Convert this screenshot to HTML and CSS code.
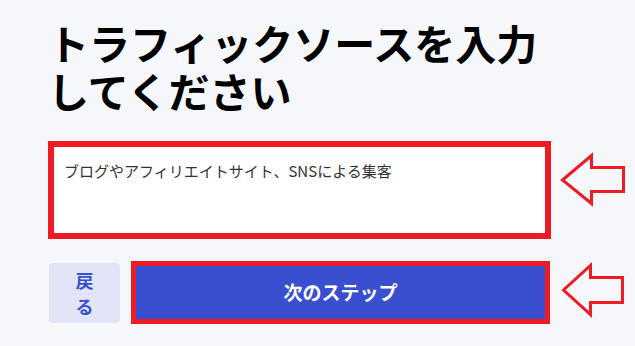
FILE: index.html
```html
<!DOCTYPE html>
<html lang="ja">
<head>
  <meta charset="UTF-8">
  <meta name="viewport" content="width=device-width, initial-scale=1.0">
  <title>トラフィックソース</title>
  <link rel="stylesheet" href="styles.css">
</head>
<body>
  <div class="step-container">
    <h1>トラフィックソースを入力してください</h1>

    <div class="field-row">
      <textarea id="trafficSource" class="source-input">ブログやアフィリエイトサイト、SNSによる集客</textarea>
      <svg class="arrow arrow-top" width="72" height="98" viewBox="0 0 72 98">
        <polygon points="6.5,39 35.5,14.5 35.5,26.5 67.5,26.5 67.5,50.5 35.5,50.5 35.5,62.5" />
      </svg>
    </div>

    <div class="button-row">
      <button type="button" class="back-btn">戻る</button>
      <div class="highlight">
        <button type="submit" class="next-btn">次のステップ</button>
      </div>
      <svg class="arrow" width="72" height="63" viewBox="0 0 72 63">
        <polygon points="8.5,29 35.5,4.5 35.5,16.5 67.5,16.5 67.5,41.5 35.5,41.5 35.5,53.5" />
      </svg>
    </div>
  </div>
</body>
</html>
```

FILE: styles.css
```css
:root {
  --primary-color: #3a4fcf;
  --light-color: #e1e5f7;
  --mark-color: #ed1c24;
  --bg-color: #f6f7fb;
}

body {
  margin: 0;
  padding: 0;
  background-color: var(--bg-color);
  font-family: "Noto Sans CJK JP", "Noto Sans", sans-serif;
}

.step-container {
  padding: 18px 0 0 48px;
}

h1 {
  width: 503px;
  margin: 0 0 27px 0;
  font-size: 41px;
  line-height: 48px;
  font-weight: bold;
  color: #000;
}

.field-row {
  display: flex;
  align-items: flex-start;
}

.source-input {
  width: 503px;
  height: 98px;
  box-sizing: border-box;
  border: 6px solid var(--mark-color);
  padding: 13px 10px;
  margin: 0;
  background-color: white;
  font-family: "Noto Sans CJK JP", sans-serif;
  font-size: 15px;
  line-height: 22px;
  color: #333;
  resize: none;
  outline: none;
}

.arrow {
  margin-left: 5px;
  flex-shrink: 0;
}

.arrow polygon {
  fill: none;
  stroke: var(--mark-color);
  stroke-width: 3;
}

.button-row {
  display: flex;
  align-items: center;
  margin-top: 22px;
}

.back-btn {
  width: 71px;
  height: 60px;
  margin-left: 1px;
  margin-right: 11px;
  padding: 0 26px;
  border: none;
  border-radius: 4px;
  background-color: var(--light-color);
  color: var(--primary-color);
  font-family: "Noto Sans CJK JP", sans-serif;
  font-size: 18px;
  font-weight: bold;
  line-height: 26px;
}

.highlight {
  border: 5px solid var(--mark-color);
}

.next-btn {
  display: block;
  width: 409px;
  height: 53px;
  padding-bottom: 3px;
  border: none;
  background-color: var(--primary-color);
  color: white;
  font-family: "Noto Sans CJK JP", sans-serif;
  font-size: 19px;
  font-weight: bold;
}
```
